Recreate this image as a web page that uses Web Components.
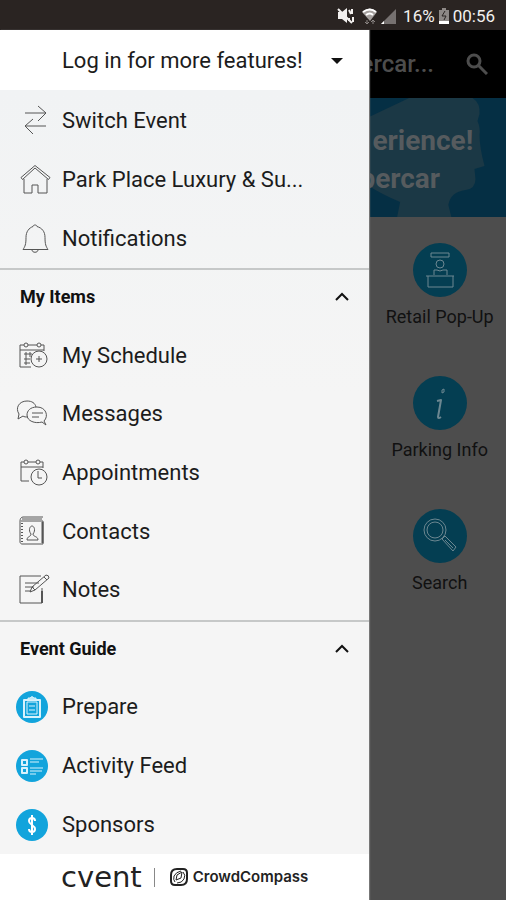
<!DOCTYPE html>
<html lang="en">
<head>
<meta charset="utf-8">
<meta name="viewport" content="width=device-width, initial-scale=1">
<title>Event Menu</title>
<style>
  html, body { height: 100%; }
  body {
    margin: 0;
    font-family: Roboto, "Liberation Sans", sans-serif;
    color: #1c1c1c;
    background: #4d4d4d;
  }
</style>
</head>
<body>
<event-app>
  <status-bar slot="status" data-battery="16%" data-time="00:56"></status-bar>

  <side-drawer slot="drawer">
    <login-button slot="top">Log in for more features!</login-button>
    <menu-section data-rows="3">
      <menu-item data-icon="switch">Switch Event</menu-item>
      <menu-item data-icon="house">Park Place Luxury &amp; Su...</menu-item>
      <menu-item data-icon="bell">Notifications</menu-item>
    </menu-section>
    <menu-section data-rows="6" data-title="My Items">
      <menu-item data-icon="schedule">My Schedule</menu-item>
      <menu-item data-icon="messages">Messages</menu-item>
      <menu-item data-icon="appointments">Appointments</menu-item>
      <menu-item data-icon="contacts">Contacts</menu-item>
      <menu-item data-icon="notes">Notes</menu-item>
    </menu-section>
    <menu-section data-rows="4" data-title="Event Guide">
      <menu-item data-icon="prepare">Prepare</menu-item>
      <menu-item data-icon="feed">Activity Feed</menu-item>
      <menu-item data-icon="sponsors">Sponsors</menu-item>
    </menu-section>
    <brand-footer slot="bottom"></brand-footer>
  </side-drawer>

  <home-screen slot="home" data-title="ercar...">
    <event-banner slot="banner"><span>erience!</span><span slot="second">percar</span></event-banner>
    <home-tile data-icon="retail">Retail Pop-Up</home-tile>
    <home-tile data-icon="info">Parking Info</home-tile>
    <home-tile data-icon="search">Search</home-tile>
  </home-screen>
</event-app>

<script>
// line icons are drawn on a 36px grid, tile icons on a 54px grid
const icons = {
  switch: `<path d="M9 10H30M22 3l8 7-8 8M30 23H9M17 16l-8 7 8 8"/>`,
  house: `<path d="M8 17v14h8v-8h6v8h9V17"/><path d="M5 15.500L19 3.500l15 12-1.500 2L19 6 6.500 17.500z"/>`,
  bell: `<path d="M17 5.500c0-2 4-2 4 0 5 1.500 8 5 8 11 0 7 1 9 3 12H7c2-3 3-5 3-12 0-6 3-9.500 7-11zM16 29c0 3 6 3 6 0"/>`,
  schedule: `<path d="M15 29H4V7h4M12 7h9M25 7h3v6M4 12h24M8 16h8M8 21h6M8 25h6M10 14v13M14 14v5"/><circle cx="10" cy="7" r="2"/><circle cx="23" cy="7" r="2"/><circle cx="23" cy="21" r="8"/><path d="M23 18v6M20 21h6"/>`,
  messages: `<path d="M12 21c-2 0-4 0-5-1l-5 3 1-5C-1 12 3 5 11 5c5 0 8 2 9 6"/><path d="M28 25c5-5 2-14-7-14-7 0-10 4-10 8 0 6 8 9 15 7l4 3z"/><path d="M16 17h11M16 21h7"/>`,
  appointments: `<path d="M13 26H5V7h3M12 7h8M24 7h3v6M5 12h22"/><circle cx="10" cy="7" r="2"/><circle cx="22" cy="7" r="2"/><circle cx="23" cy="22" r="8"/><path d="M22 16v7h4"/>`,
  contacts: `<path d="M27 3H7c-2 0-3 2-3 4v21c0 1 1 2 2 2h21V7H5M6 5h20"/><path d="M6 9v20" stroke-width="2" stroke-dasharray="1 2"/><path d="M26.500 8v21" stroke-width="2"/><path d="M11 26c0-4 4-3 4-6-3-4-1-8 1-8s4 4 1 8c0 3 5 2 5 6z"/>`,
  notes: `<path d="M25 4H4v27h22V16"/><path d="M9 11h14M9 15h9M9 19h6M14 20l2-5L30 3q3 0 3 3L19 18zM16 15l3 3M28 5l3 3"/><path d="M26 19v12" stroke-width="2"/>`,
  prepare: `<circle class="disc" cx="16" cy="18" r="16"/><g class="light"><path d="M8 11h16v17H8z" stroke-width="2"/><path d="M11 13h10v12H11zM13 17h6M13 21h6"/><path d="M12 11V9h2q2-3 4 0h2v2z" fill="#bfe7f7"/></g>`,
  feed: `<circle class="disc" cx="16" cy="18" r="16"/><g class="light"><path d="M6 12h5v5H6zM6 20h5v5H6z" stroke-width="2"/><path d="M14 11h13M14 14h9M14 20h13M14 23h12M14 26h6"/></g>`,
  sponsors: `<circle class="disc" cx="16" cy="18" r="16"/><path d="M19 14c0-4-6-4-6 0s6 4 6 8-6 4-6 0M16 8v20" style="stroke:#fff" stroke-width="2"/>`,
  retail: `<path d="M18 10h18v4H18z"/><circle cx="27" cy="21" r="4"/><path d="M21 32v-5h3l3 1 3-1h4v5M13 33h28M15 33v11h25V33"/>`,
  info: `<path d="M29 14l2-1v3l-2 1z"/><path d="M24 25l4-1-3 17q0 2 3 0" stroke-width="2"/>`,
  search: `<circle cx="22" cy="21" r="11"/><circle cx="22" cy="21" r="8"/><path d="M29 30l3-3 11 11-3 4zM32 31l8 8"/>`,
};

class LineIcon extends HTMLElement {
  connectedCallback() {
    const shadow = this.attachShadow({ mode: "open" });
    const size = this.dataset.size || 36;
    shadow.innerHTML = `
<style>
:host { display: block; flex: none; line-height: 0; }
svg { fill: none; stroke: currentColor; stroke-width: 1; stroke-linejoin: round; overflow: visible; }
.disc { fill: #12a4dc; stroke: none; }
.light { stroke: #d8f2fc; }
</style>
<svg width="${size}" height="${size}" viewBox="0 0 ${size} ${size}" aria-hidden="true">${icons[this.dataset.name]}</svg>`;
  }
}
customElements.define("line-icon", LineIcon);

class EventApp extends HTMLElement {
  constructor() {
    super();
    this.attachShadow({ mode: "open" }).innerHTML = `
<style>
:host {
  display: grid;
  grid-template: auto 1fr / minmax(0, 73fr) minmax(0, 27fr);
  min-height: 100vh;
}
slot { display: grid; min-width: 0; }
slot[name="status"] { grid-column: 1 / 3; }
slot[name="drawer"] { z-index: 1; }
</style>
<slot name="status"></slot>
<slot name="drawer"></slot>
<slot name="home"></slot>`;
  }
}
customElements.define("event-app", EventApp);

class StatusBar extends HTMLElement {
  connectedCallback() {
    this.attachShadow({ mode: "open" }).innerHTML = `
<style>
:host {
  display: flex;
  align-items: center;
  justify-content: flex-end;
  gap: 4px;
  height: 30px;
  padding: 2px 11px 0;
  box-sizing: border-box;
  background: #2a2422;
  color: #f2f0ef;
  font-size: 17px;
  line-height: 24px;
}
</style>
<svg width="63" height="20" viewBox="3 0 63 20" aria-hidden="true">
  <path d="M5 6h4l5-4v15l-5-4H5z" fill="#f2f0ef"/>
  <path d="M5 3l14 14M16 4l2 4M19 3v5M16 12v3M20 11v5" stroke="#f2f0ef" stroke-width="2"/>
  <path d="M29 6q8-7 15 0l-7 9z" fill="#a5a09e"/>
  <path d="M30 6q7-5 13 0M33 9q4-3 7 0" fill="none" stroke="#fff" stroke-width="2"/>
  <path d="M34 14v4m-2-2l2 2 2-2M40 18v-4m-2 2l2-2 2 2" fill="none" stroke="#8b8684"/>
  <path d="M63 3v15H48z" fill="#767170"/>
  <path d="M51 15v3h-3z" fill="#fff"/>
</svg>
<span>${this.dataset.battery}</span>
<svg width="10" height="18" viewBox="0 0 10 18" aria-hidden="true">
  <path d="M3 1h4v2h3v14H0V3h3z" fill="#8d8886"/>
  <path d="M0 14h10v3H0z" fill="#fff"/>
  <path d="M6 4L3 9h4l-2 4" fill="none" stroke="#2a2422"/>
</svg>
<span>${this.dataset.time}</span>`;
  }
}
customElements.define("status-bar", StatusBar);

class SideDrawer extends HTMLElement {
  constructor() {
    super();
    this.attachShadow({ mode: "open" }).innerHTML = `
<style>
:host {
  display: flex;
  flex-direction: column;
  min-width: 0;
  background: #fff;
  box-shadow: 1px 0 1px #777;
}
nav {
  display: flex;
  flex-direction: column;
  flex: 1;
  padding-top: 2px;
  background: linear-gradient(#f1f3f4, #f5f5f5 40%);
}
</style>
<slot name="top"></slot>
<nav aria-label="Event menu"><slot></slot></nav>
<slot name="bottom"></slot>`;
  }
}
customElements.define("side-drawer", SideDrawer);

class LoginButton extends HTMLElement {
  constructor() {
    super();
    this.attachShadow({ mode: "open" }).innerHTML = `
<style>
:host { display: block; }
button {
  display: flex;
  align-items: center;
  justify-content: space-between;
  width: 100%;
  height: 60px;
  padding: 2px 26px 0 62px;
  border: 0;
  background: #fff;
  color: inherit;
  font: 22px/28px Roboto, sans-serif;
  white-space: nowrap;
}
</style>
<button type="button"><slot></slot>
  <svg width="12" height="6" viewBox="0 0 12 6" aria-hidden="true"><path d="M0 0h12L6 6z" fill="#111"/></svg>
</button>`;
  }
}
customElements.define("login-button", LoginButton);

class MenuSection extends HTMLElement {
  connectedCallback() {
    const title = this.dataset.title;
    this.attachShadow({ mode: "open" }).innerHTML = `
<style>
:host {
  display: flex;
  flex-direction: column;
  flex: ${this.dataset.rows} 1 0;
}
button {
  display: flex;
  align-items: center;
  justify-content: space-between;
  flex: 1 1 0;
  min-height: 48px;
  padding: 0 20px;
  border: 0;
  box-shadow: inset 0 2px #c6c8c8;
  background: none;
  color: #111;
  font: 700 18px/24px Roboto, sans-serif;
}
</style>
${title ? `<button type="button" aria-expanded="true">${title}
  <svg width="14" height="10" viewBox="0 0 14 10" aria-hidden="true"><path d="M1 8l6-6 6 6" fill="none" stroke="#111" stroke-width="2"/></svg>
</button>` : ""}
<slot></slot>`;
  }
}
customElements.define("menu-section", MenuSection);

class MenuItem extends HTMLElement {
  connectedCallback() {
    this.attachShadow({ mode: "open" }).innerHTML = `
<style>
:host { display: flex; flex: 1 1 0; min-height: 48px; }
a {
  display: flex;
  align-items: center;
  flex: 1;
  gap: 10px;
  padding: 0 16px;
  color: inherit;
  font-size: 22px;
  line-height: 28px;
  text-decoration: none;
  white-space: nowrap;
}
line-icon { color: #555; }
</style>
<a href="#${this.dataset.icon}"><line-icon data-name="${this.dataset.icon}"></line-icon><span><slot></slot></span></a>`;
  }
}
customElements.define("menu-item", MenuItem);

class BrandFooter extends HTMLElement {
  constructor() {
    super();
    this.attachShadow({ mode: "open" }).innerHTML = `
<style>
:host {
  display: flex;
  align-items: center;
  justify-content: center;
  height: 46px;
  color: #222;
}
.cvent { font: 29px/32px "DejaVu Sans", sans-serif; }
.rule { width: 1px; height: 19px; margin: 0 15px 0 12px; background: #888; }
.compass { margin-left: 5px; font: 600 15px/24px Inter, sans-serif; }
</style>
<span class="cvent">cvent</span>
<span class="rule"></span>
<svg width="18" height="18" viewBox="0 0 18 18" fill="none" stroke="#222" aria-hidden="true">
  <path d="M7 1h6q4 0 4 4v6q0 6-6 6H5q-4 0-4-4V7q0-6 6-6z" stroke-width="2"/>
  <path d="M5 14q-2-2-1-6 2-4 7-5M13 4q3 3 1 7-2 4-7 4M6 12l1-5 5-3-1 6z"/>
</svg>
<span class="compass">CrowdCompass</span>`;
  }
}
customElements.define("brand-footer", BrandFooter);

class HomeScreen extends HTMLElement {
  connectedCallback() {
    this.attachShadow({ mode: "open" }).innerHTML = `
<style>
:host { display: block; min-width: 0; background: #4d4d4d; }
header {
  display: flex;
  align-items: center;
  justify-content: flex-end;
  gap: 32px;
  height: 68px;
  padding-right: 18px;
  background: #000;
  color: #4d4d4d;
}
h1 { margin: 0; font-size: 24px; line-height: 32px; font-weight: 500; }
button { padding: 0; border: 0; background: none; color: inherit; line-height: 0; }
main { display: grid; gap: 47px; padding: 26px 0 0 4px; }
</style>
<header>
  <h1>${this.dataset.title}</h1>
  <button type="button" aria-label="Find">
    <svg width="22" height="22" viewBox="0 0 22 22" fill="none" stroke="currentColor" stroke-width="3" aria-hidden="true"><circle cx="8" cy="8" r="6"/><path d="M12 12l9 9"/></svg>
  </button>
</header>
<slot name="banner"></slot>
<main><slot></slot></main>`;
  }
}
customElements.define("home-screen", HomeScreen);

class EventBanner extends HTMLElement {
  constructor() {
    super();
    this.attachShadow({ mode: "open" }).innerHTML = `
<style>
:host {
  display: grid;
  grid-template: "all" 119px / minmax(0, 1fr);
  background: #052f44;
  color: #565b5e;
}
svg { grid-area: all; width: 100%; height: 100%; }
div {
  grid-area: all;
  display: flex;
  flex-direction: column;
  align-items: flex-start;
  justify-content: center;
  padding: 4px 0 0 3px;
  font: bold 28px/38px Roboto, sans-serif;
  white-space: nowrap;
}
/* the second line starts further left, under the drawer */
.second { margin-left: -13px; }
</style>
<svg viewBox="0 0 136 119" preserveAspectRatio="none" aria-hidden="true">
  <path d="M0 19L40 0H103q8 5 7 16l-2 7q3 7 2 14 0 12 5 31l-10 3 1 10q0 10-10 11-15 2-17 15l3 12H28l3-15Q12 96 0 88z" fill="#1b3845"/>
</svg>
<div><span><slot></slot></span><span class="second"><slot name="second"></slot></span></div>`;
  }
}
customElements.define("event-banner", EventBanner);

class HomeTile extends HTMLElement {
  connectedCallback() {
    this.attachShadow({ mode: "open" }).innerHTML = `
<style>
:host { display: block; min-width: 0; }
a {
  display: flex;
  flex-direction: column;
  align-items: center;
  gap: 8px;
  color: #111;
  font-size: 18px;
  line-height: 24px;
  text-decoration: none;
  white-space: nowrap;
}
line-icon { border-radius: 50%; background: #043e52; color: #6c8791; }
</style>
<a href="#${this.dataset.icon}"><line-icon data-name="${this.dataset.icon}" data-size="54"></line-icon><span><slot></slot></span></a>`;
  }
}
customElements.define("home-tile", HomeTile);
</script>
</body>
</html>
